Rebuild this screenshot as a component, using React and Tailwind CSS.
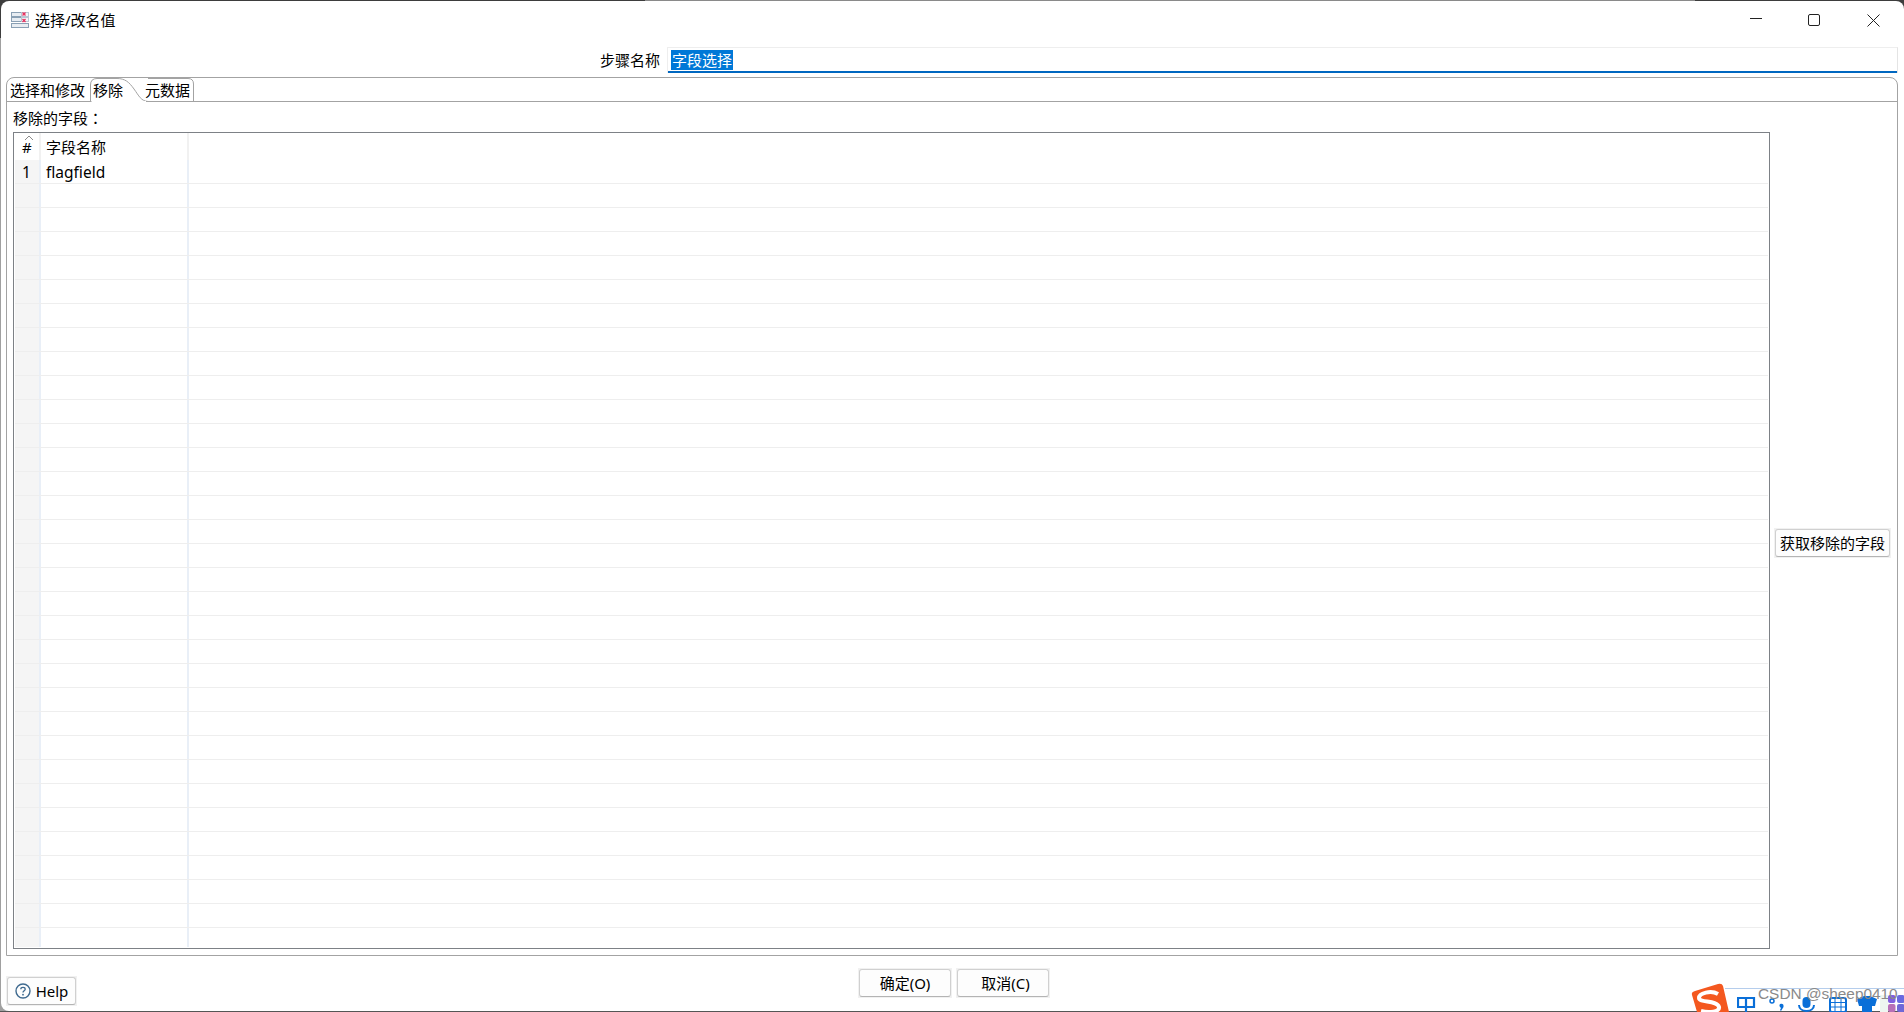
const CJK = '"Noto Sans","Noto Sans CJK SC",sans-serif';

function Btn({ className = "", children }) {
  return (
    <div className={"bg-[#f1f1f1] p-px " + className}>
      <div className="h-full flex items-center justify-center rounded-[3px] border border-[#d0d0d0] border-b-[#b4b4b4] bg-[#fdfdfd] text-[15px] text-black">
        {children}
      </div>
    </div>
  );
}

function TitleIcon() {
  return (
    <svg width="19" height="16" viewBox="0 0 19 16" className="shrink-0 -mt-px">
      <rect x="0.5" y="0.5" width="10" height="4" fill="#e8edf2" stroke="#8aa0b4" />
      <rect x="0.5" y="5.5" width="10" height="4" fill="#e8edf2" stroke="#8aa0b4" />
      <rect x="0.5" y="11.5" width="17" height="4" fill="#e8edf2" stroke="#8aa0b4" />
      <rect x="10.5" y="0.5" width="7" height="4" fill="#f3f5f7" stroke="#b8c6d2" />
      <rect x="10.5" y="5.5" width="7" height="4" fill="#f3f5f7" stroke="#b8c6d2" />
      <path d="M11.5 0.5l3 3M14.5 0.5l-3 3M11.5 7l3 3M14.5 7l-3 3" stroke="#e8305e" strokeWidth="1.3" />
    </svg>
  );
}

function TabsOutline() {
  return (
    <svg width="200" height="24" viewBox="0 0 200 24" className="absolute left-0 top-0" fill="none">
      <path d="M83.5 24V7Q83.5 0.5 90 0.5H110C118 0.5 122 4 127 11C132 18 134 23 141 23.5" stroke="#a3a3a3" />
      <path d="M0 23.5H83" stroke="#a3a3a3" />
      <path d="M141 0.5H181Q186.5 0.5 186.5 6V23" stroke="#a3a3a3" />
      <path d="M84.5 23.5H139" stroke="#ffffff" />
    </svg>
  );
}

function Table() {
  const rows = Array.from({ length: 33 });
  return (
    <div className="flex-1 h-[817px] border border-[#7d8186] bg-white">
      <div className="h-[814px] px-px overflow-hidden">
        <div className="h-[27px] flex text-[15px] text-black">
          <div className="relative w-[26px] pl-[7px] pt-[3px] border-r-2 border-[#f1f1f1]">
            #
            <svg width="10" height="6" viewBox="0 0 10 6" className="absolute left-[9px] top-[2px]" fill="none">
              <path d="M1 5L5 1L9 5" stroke="#8a8a8a" />
            </svg>
          </div>
          <div className="w-[148px] pl-[5px] pt-[3px] border-r-2 border-[#f1f1f1]">字段名称</div>
        </div>
        {rows.map((_, i) => (
          <div key={i} className="h-[24px] flex border-b border-[#eeeeee] text-[15px] text-black leading-[24px]">
            <div className="w-[26px] pl-[7px] bg-[#f5f5f5] border-r-2 border-[#e9eff7] text-[15.5px]">{i === 0 ? "1" : ""}</div>
            <div className="w-[148px] pl-[5px] border-r-2 border-[#e9eff7] text-[15.5px]">{i === 0 ? "flagfield" : ""}</div>
          </div>
        ))}
      </div>
    </div>
  );
}

function ImeBar() {
  return (
    <div className="absolute right-0 bottom-0 w-[213px] h-[29px]">
      <div className="absolute left-[34px] right-0 top-[5px] h-px bg-[#b5cdec]" />
      <svg width="40" height="29" viewBox="0 0 40 29" className="absolute left-0 top-0">
        <path d="M1 12Q0 9 4 8L27 1Q31 0 32 3L38 29H6Z" fill="#f4581f" />
        <path d="M27 11C20 7 8 10 8 15C8 20 26 17 28 24C29 29 18 30 10 28" fill="none" stroke="#fff" strokeWidth="4" />
      </svg>
      <svg width="150" height="24" viewBox="0 0 150 24" className="absolute left-[46px] top-[5px]" fill="#0a6fd8">
        <path d="M1 10H17V19H1ZM9 9V24" fill="none" stroke="#0a6fd8" strokeWidth="2.2" />
        <circle cx="35" cy="13" r="2" fill="none" stroke="#0a6fd8" strokeWidth="1.5" />
        <path d="M43 16Q47 15 46.5 19L44 23L43 22L44 20Q41.5 18 43 16Z" />
        <rect x="65.5" y="9" width="8" height="11" rx="4" />
        <path d="M62 17C62 25 77 25 77 17" fill="none" stroke="#0a6fd8" strokeWidth="2" />
        <rect x="93" y="10" width="16" height="14" rx="2" fill="none" stroke="#0a6fd8" strokeWidth="2" />
        <path d="M93 14.5H109M93 19H109M98 10V24M104 10V24" stroke="#0a6fd8" />
        <path d="M120 11L127 8H133L140 11L138 18H135V24H125V18H122Z" />
      </svg>
      <svg width="24" height="17" viewBox="0 0 24 17" className="absolute right-0 top-[12px]">
        <rect x="0" y="0" width="8" height="17" fill="#eef6f0" />
        <rect x="8" y="0" width="7.5" height="8" rx="2" fill="#8060e0" />
        <rect x="17" y="0" width="7.5" height="8" rx="2" fill="#6a6ae0" />
        <rect x="8" y="9" width="7.5" height="8" rx="2" fill="#b870b8" />
        <rect x="17" y="9" width="7.5" height="8" rx="2" fill="#7068d8" />
      </svg>
      <span className="absolute left-[67px] -top-px text-[15.4px] text-[#8a8a8a] whitespace-nowrap" style={{ fontFamily: '"Liberation Sans",sans-serif' }}>
        CSDN @sheep0410
      </span>
    </div>
  );
}

export default function App() {
  return (
    <div
      className="relative w-[1904px] h-[1012px] overflow-hidden bg-[linear-gradient(to_bottom,#3d3d3d_38px,#a0a0a0_38px,#a0a0a0_1011px,#555555_1011px)]"
      style={{ fontFamily: CJK }}
    >
      <div className="absolute top-0 left-[645px] w-[1050px] h-px bg-[#8a8a8a]" />
      <div className="h-[1010px] mt-px ml-px flex flex-col rounded-lg bg-white">
        {/* title bar */}
        <div className="h-[46px] shrink-0 flex items-start">
          <div className="flex items-center gap-[5px] pl-[10px] pt-[8px] text-[15px] text-black leading-[22px]">
            <TitleIcon />
            <span>选择/改名值</span>
          </div>
          <div className="ml-auto flex items-center gap-[47px] pt-[12px] pr-[24px]">
            <svg width="12" height="14" viewBox="0 0 12 14" fill="none" className="-mr-px"><path d="M0 5.5H12" stroke="#222" /></svg>
            <svg width="12" height="12" viewBox="0 0 12 12" fill="none"><rect x="0.5" y="0.5" width="11" height="11" rx="1.5" stroke="#222" /></svg>
            <svg width="13" height="13" viewBox="0 0 13 13" fill="none"><path d="M0.5 0.5L12.5 12.5M12.5 0.5L0.5 12.5" stroke="#222" /></svg>
          </div>
        </div>
        {/* step name row */}
        <div className="h-[26px] shrink-0 flex items-center justify-end pr-[6px]">
          <span className="text-[15px] text-black mr-[7px]">步骤名称</span>
          <div className="w-[1231px] h-[26px] border border-[#eeeeee] border-b-0 border-r-[#e4e4e4] flex flex-col justify-between">
            <div className="pl-[3px] pt-[2px] flex">
              <span className="bg-[#0078d7] text-white text-[15px] leading-[20px] px-[1px]">字段选择</span>
            </div>
            <div className="h-[2px] bg-[#0067c0]" />
          </div>
        </div>
        {/* tab folder */}
        <div className="relative mt-[4px] ml-[5px] mr-[6px] h-[879px] shrink-0 border border-[#a3a3a3] rounded-t-[8px] flex flex-col">
          <TabsOutline />
          <div className="h-[23px] shrink-0 flex text-[15px] text-black leading-[24px] relative">
            <span className="w-[83px] pl-[3px]">选择和修改</span>
            <span className="w-[46px] pl-[3px]">移除</span>
            <span className="pl-[9px]">元数据</span>
          </div>
          <div className="h-px shrink-0 bg-[#a3a3a3]" />
          <div className="flex-1 bg-white pl-[6px] pr-[6px] flex flex-col">
            <div className="h-[30px] shrink-0 pt-[5px] text-[15px] text-black leading-[22px]">
              移除的字段<span className="font-['Noto_Sans_CJK_TC']">：</span>
            </div>
            <div className="flex items-center gap-[4px]">
              <Table />
              <Btn className="w-[117px] h-[30px] mt-[5px]"><span>获取移除的字段</span></Btn>
            </div>
          </div>
        </div>
        {/* footer */}
        <div className="relative flex-1 grid grid-cols-[852px_auto_1fr] items-start pl-[5px]">
          <Btn className="w-[71px] h-[30px] mt-[20px]">
            <span className="flex items-center gap-[5px]">
              <svg width="16" height="16" viewBox="0 0 16 16" fill="none">
                <circle cx="8" cy="8" r="7" stroke="#3f6a8f" strokeWidth="1.4" />
                <path d="M5.8 6.2C5.8 3.8 10.2 3.8 10.2 6.2C10.2 7.8 8 7.8 8 9.6" stroke="#3f6a8f" strokeWidth="1.3" />
                <circle cx="8" cy="11.7" r="0.9" fill="#3f6a8f" />
              </svg>
              <span>Help</span>
            </span>
          </Btn>
          <div className="flex gap-[4px] mt-[12px]">
            <Btn className="w-[94px] h-[30px]">确定(O)</Btn>
            <Btn className="w-[94px] h-[30px]"><span className="pl-[5px]">取消(C)</span></Btn>
          </div>
          <div />
        </div>
      </div>
      <ImeBar />
    </div>
  );
}
